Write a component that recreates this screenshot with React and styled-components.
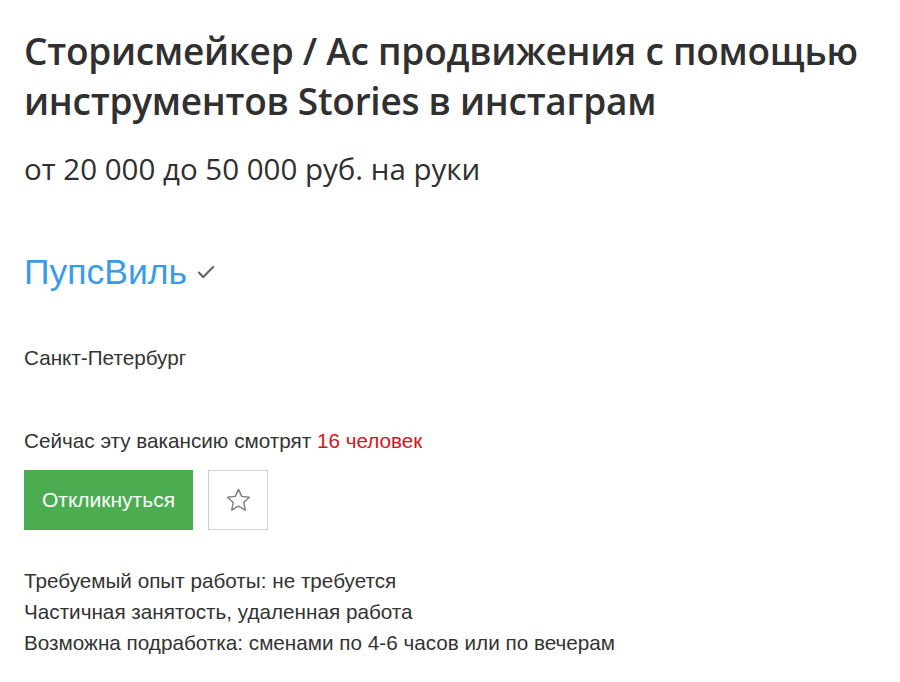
import styled, { createGlobalStyle } from "styled-components";

const GlobalStyle = createGlobalStyle`
  body {
    margin: 0;
    background: #ffffff;
    font-family: "Liberation Sans", Arial, sans-serif;
    color: #222222;
  }
`;

const Page = styled.div`
  padding: 26px 24px 0 24px;
  display: flex;
  flex-direction: column;
`;

const Title = styled.h1`
  margin: 0;
  font-family: "Open Sans", sans-serif;
  font-weight: 600;
  font-size: 37px;
  line-height: 50px;
  color: #303030;
  letter-spacing: -0.25px;
`;

const Salary = styled.p`
  margin: 25px 0 0 0;
  font-family: "Open Sans", sans-serif;
  font-size: 29.5px;
  line-height: 36px;
  color: #303030;
`;

const Company = styled.div`
  margin-top: 63px;
  display: flex;
  align-items: center;
  gap: 8px;
`;

const CompanyName = styled.a`
  font-size: 35.5px;
  line-height: 44px;
  color: #3a9be8;
  text-decoration: none;
`;

const City = styled.p`
  margin: 52px 0 0 0;
  font-size: 20.7px;
  line-height: 24px;
  color: #333333;
`;

const Viewers = styled.p`
  margin: 59px 0 0 0;
  font-size: 20.7px;
  line-height: 24px;
  color: #333333;
`;

const Count = styled.span`
  color: #d6131b;
`;

const Actions = styled.div`
  margin-top: 17px;
  display: flex;
  gap: 15px;
`;

const RespondButton = styled.button`
  width: 169px;
  height: 60px;
  border: none;
  background: #4bad50;
  color: #ffffff;
  font-family: "Liberation Sans", Arial, sans-serif;
  font-size: 21px;
  padding: 0;
  cursor: pointer;
`;

const StarButton = styled.button`
  width: 60px;
  height: 60px;
  box-sizing: border-box;
  border: 1px solid #cfcfcf;
  background: #ffffff;
  display: flex;
  align-items: center;
  justify-content: center;
  padding: 0;
  cursor: pointer;
`;

const Details = styled.div`
  margin-top: 35px;
  display: flex;
  flex-direction: column;
`;

const DetailLine = styled.p`
  margin: 0;
  font-size: 20.7px;
  line-height: 31px;
  color: #333333;
`;

const CheckIcon = () => (
  <svg width="22" height="22" viewBox="0 0 20 20">
    <path d="M3.5 10.5 L7.5 14.5 L16.5 5.5" fill="none" stroke="#666666" strokeWidth="2" strokeLinecap="round" strokeLinejoin="round" />
  </svg>
);

const StarIcon = () => (
  <svg width="29" height="29" viewBox="0 0 24 24">
    <path
      d="M12 2.8 L14.7 8.6 L21 9.3 L16.3 13.6 L17.6 19.9 L12 16.7 L6.4 19.9 L7.7 13.6 L3 9.3 L9.3 8.6 Z"
      fill="none"
      stroke="#808080"
      strokeWidth="1.2"
      strokeLinejoin="round"
    />
  </svg>
);

const App = () => {
  return (
    <Page>
      <GlobalStyle />
      <Title>Сторисмейкер / Ас продвижения с помощью инструментов Stories в инстаграм</Title>
      <Salary>от 20 000 до 50 000 руб. на руки</Salary>
      <Company>
        <CompanyName href="#">ПупсВиль</CompanyName>
        <CheckIcon />
      </Company>
      <City>Санкт-Петербург</City>
      <Viewers>
        Сейчас эту вакансию смотрят <Count>16 человек</Count>
      </Viewers>
      <Actions>
        <RespondButton>Откликнуться</RespondButton>
        <StarButton>
          <StarIcon />
        </StarButton>
      </Actions>
      <Details>
        <DetailLine>Требуемый опыт работы: не требуется</DetailLine>
        <DetailLine>Частичная занятость, удаленная работа</DetailLine>
        <DetailLine>Возможна подработка: сменами по 4-6 часов или по вечерам</DetailLine>
      </Details>
    </Page>
  );
};

export default App;
